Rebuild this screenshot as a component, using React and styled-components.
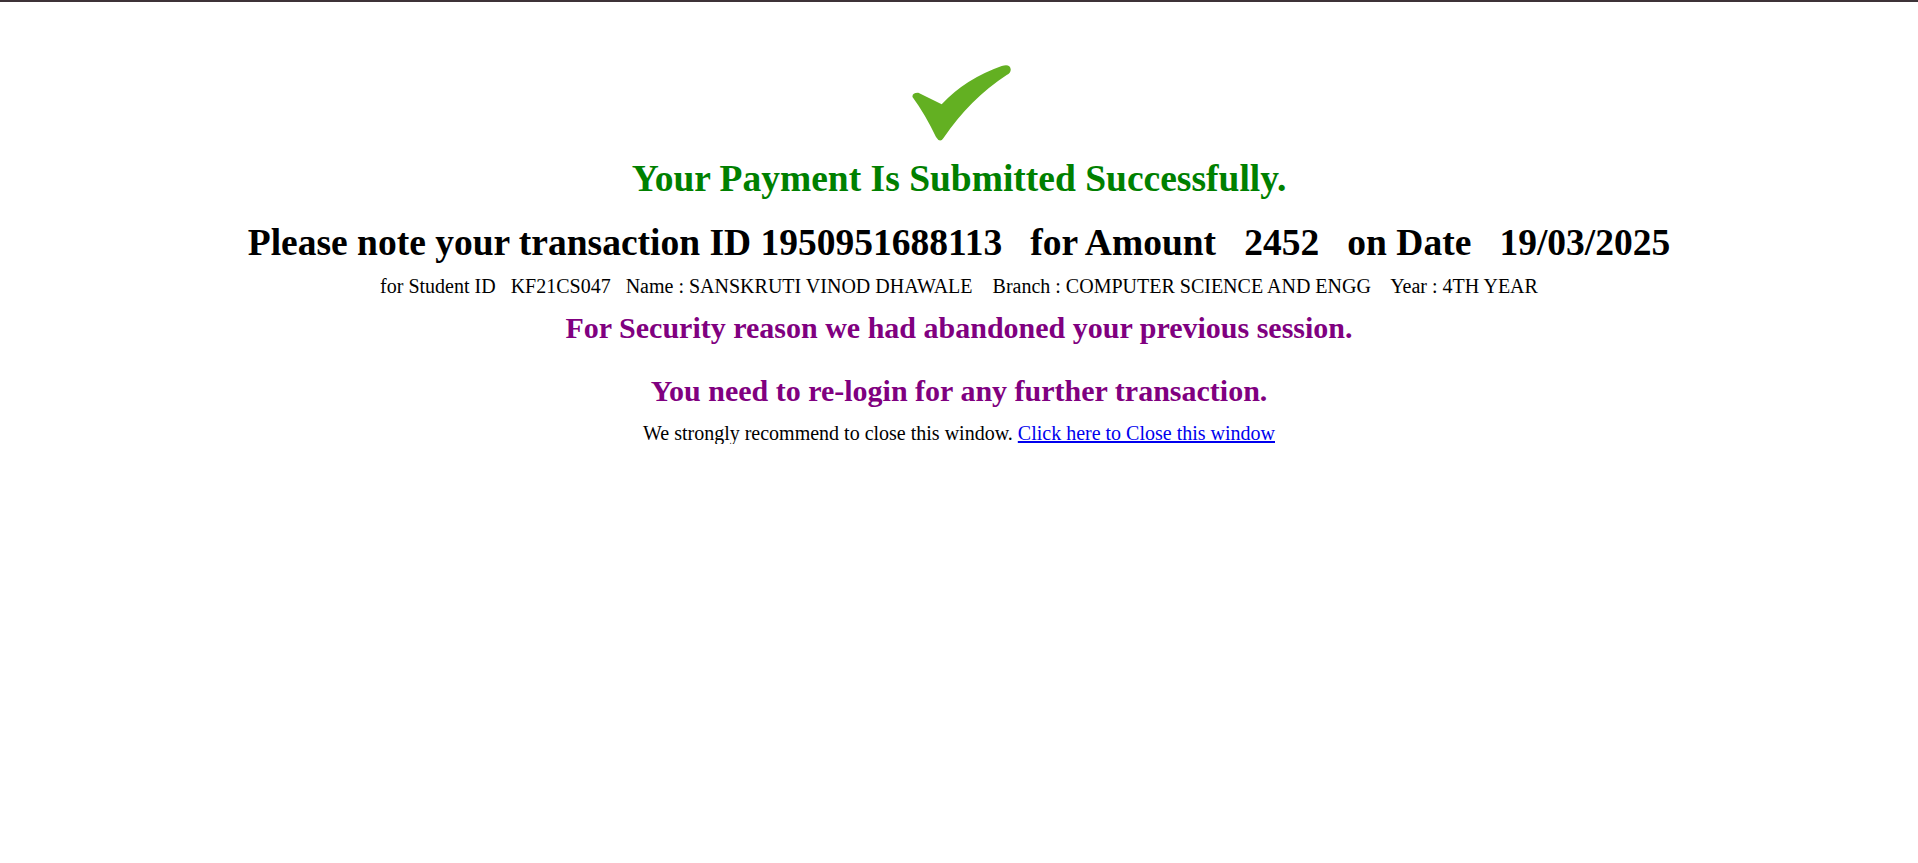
import React from 'react';
import styled, { createGlobalStyle } from 'styled-components';

const GlobalStyle = createGlobalStyle`
  html, body {
    margin: 0;
    padding: 0;
    background: #ffffff;
    font-family: "Liberation Serif", "Times New Roman", serif;
  }
`;

const TopLine = styled.div`
  height: 2px;
  background-color: #3d3338;
`;

const Page = styled.div`
  display: flex;
  flex-direction: column;
  align-items: center;
  text-align: center;
`;

const CheckMark = styled.svg`
  display: block;
  width: 102px;
  height: 79px;
  margin: 62px 0 0 4px;
`;

const Title = styled.h1`
  margin: 16px 0 0;
  font-size: 37.5px;
  line-height: 40px;
  font-weight: bold;
  color: #008000;
`;

const TransactionLine = styled.h1`
  margin: 22px 0 0;
  font-size: 37.5px;
  line-height: 44px;
  font-weight: bold;
  color: #000000;
  white-space: pre;
`;

const StudentLine = styled.div`
  margin-top: 9px;
  font-size: 20px;
  line-height: 24px;
  color: #000000;
  white-space: pre;
`;

const Notice = styled.h2`
  margin: ${(p) => p.$gap}px 0 0;
  font-size: 30px;
  line-height: 34px;
  font-weight: bold;
  color: #800080;
`;

const CloseLine = styled.p`
  margin: 14px 0 0;
  font-size: 20px;
  line-height: 22px;
  color: #000000;

  a {
    color: #0000ee;
    text-decoration: underline;
    cursor: pointer;
  }
`;

function App() {
  const booking = {
    transactionId: '1950951688113',
    amount: '2452',
    date: '19/03/2025',
    studentId: 'KF21CS047',
    name: 'SANSKRUTI VINOD DHAWALE',
    branch: 'COMPUTER SCIENCE AND ENGG',
    year: '4TH YEAR',
  };

  return (
    <>
      <GlobalStyle />
      <TopLine />
      <Page>
        <CheckMark viewBox="0 0 102 79" aria-hidden="true">
          <path
            fill="#63b022"
            d="M 2.5 33 Q 2 28.5 8.3 28.7 L 31.7 40.3 Q 55 15 91.7 2 Q 100 -0.5 100.7 5.3 Q 101 9 96.7 11 Q 60 35 33.5 74 Q 30 79.5 26 73 Q 15 50 2.5 33 Z"
          />
        </CheckMark>
        <Title>Your Payment Is Submitted Successfully.</Title>
        <TransactionLine>
          {`Please note your transaction ID ${booking.transactionId}   for Amount   ${booking.amount}   on Date   ${booking.date}`}
        </TransactionLine>
        <StudentLine>
          {`for Student ID   ${booking.studentId}   Name : ${booking.name}    Branch : ${booking.branch}    Year : ${booking.year}`}
        </StudentLine>
        <Notice $gap={13}>For Security reason we had abandoned your previous session.</Notice>
        <Notice $gap={29}>You need to re-login for any further transaction.</Notice>
        <CloseLine>
          We strongly recommend to close this window.{' '}
          <a onClick={() => window.close()}>Click here to Close this window</a>
        </CloseLine>
      </Page>
    </>
  );
}

export default App;
